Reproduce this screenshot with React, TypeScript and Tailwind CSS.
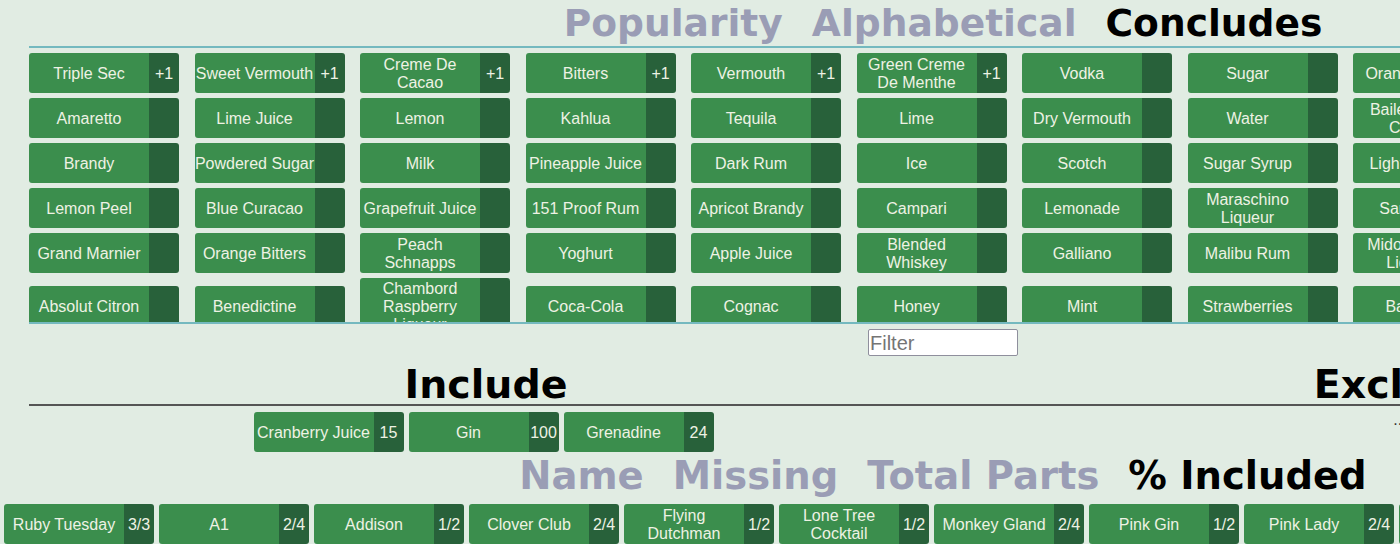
import React from 'react';

// Ingredient picker: sortable tile grid, include/exclude lists, drink results
type Tile = { name: string; badge?: string };

const popular: Tile[][] = [
  [
    { name: 'Triple Sec', badge: '+1' },
    { name: 'Sweet Vermouth', badge: '+1' },
    { name: 'Creme De\nCacao', badge: '+1' },
    { name: 'Bitters', badge: '+1' },
    { name: 'Vermouth', badge: '+1' },
    { name: 'Green Creme\nDe Menthe', badge: '+1' },
    { name: 'Vodka' },
    { name: 'Sugar' },
    { name: 'Orange Juice' },
  ],
  [
    { name: 'Amaretto' },
    { name: 'Lime Juice' },
    { name: 'Lemon' },
    { name: 'Kahlua' },
    { name: 'Tequila' },
    { name: 'Lime' },
    { name: 'Dry Vermouth' },
    { name: 'Water' },
    { name: 'Baileys Irish\nCream' },
  ],
  [
    { name: 'Brandy' },
    { name: 'Powdered Sugar' },
    { name: 'Milk' },
    { name: 'Pineapple Juice' },
    { name: 'Dark Rum' },
    { name: 'Ice' },
    { name: 'Scotch' },
    { name: 'Sugar Syrup' },
    { name: 'Light Cream' },
  ],
  [
    { name: 'Lemon Peel' },
    { name: 'Blue Curacao' },
    { name: 'Grapefruit Juice' },
    { name: '151 Proof Rum' },
    { name: 'Apricot Brandy' },
    { name: 'Campari' },
    { name: 'Lemonade' },
    { name: 'Maraschino\nLiqueur' },
    { name: 'Sambuca' },
  ],
  [
    { name: 'Grand Marnier' },
    { name: 'Orange Bitters' },
    { name: 'Peach\nSchnapps' },
    { name: 'Yoghurt' },
    { name: 'Apple Juice' },
    { name: 'Blended\nWhiskey' },
    { name: 'Galliano' },
    { name: 'Malibu Rum' },
    { name: 'Midori Melon\nLiqueur' },
  ],
  [
    { name: 'Absolut Citron' },
    { name: 'Benedictine' },
    { name: 'Chambord\nRaspberry\nLiqueur' },
    { name: 'Coca-Cola' },
    { name: 'Cognac' },
    { name: 'Honey' },
    { name: 'Mint' },
    { name: 'Strawberries' },
    { name: 'Banana' },
  ],
];

const included: Tile[] = [
  { name: 'Cranberry Juice', badge: '15' },
  { name: 'Gin', badge: '100' },
  { name: 'Grenadine', badge: '24' },
];

const drinks: Tile[] = [
  { name: 'Ruby Tuesday', badge: '3/3' },
  { name: 'A1', badge: '2/4' },
  { name: 'Addison', badge: '1/2' },
  { name: 'Clover Club', badge: '2/4' },
  { name: 'Flying\nDutchman', badge: '1/2' },
  { name: 'Lone Tree\nCocktail', badge: '1/2' },
  { name: 'Monkey Gland', badge: '2/4' },
  { name: 'Pink Gin', badge: '1/2' },
  { name: 'Pink Lady', badge: '2/4' },
  { name: 'White Lady', badge: '1/3' },
];

const TileBox: React.FC<{ tile: Tile }> = ({ tile }) => (
  <div className="flex w-[150px] shrink-0 overflow-hidden rounded-[3px] text-[16px] leading-[18px] text-[#eef2e4]">
    <div className="flex min-h-[40px] w-[120px] items-center justify-center whitespace-pre-line bg-[#3b8e4d] pt-[2px] text-center">
      {tile.name}
    </div>
    <div className="flex w-[30px] items-center justify-center bg-[#28613a] pt-[2px]">{tile.badge}</div>
  </div>
);

const Heading: React.FC<{ words: string[]; active: number; className?: string }> = ({ words, active, className }) => (
  <div className={`flex justify-center gap-[29px] font-bold whitespace-nowrap ${className ?? ''}`} style={{ fontFamily: '"DejaVu Sans", sans-serif' }}>
    {words.map((w, i) => (
      <span key={w} className={i === active ? 'text-black' : 'text-[#9a9db5]'}>
        {w}
      </span>
    ))}
  </div>
);

export default function App() {
  return (
    <div
      className="h-[544px] w-[1400px] overflow-hidden bg-[#e1ece3]"
      style={{ fontFamily: '"Liberation Sans", Arial, sans-serif' }}
    >
      <div className="ml-[29px] w-[1828px]">
        <Heading
          words={['Popularity', 'Alphabetical', 'Concludes']}
          active={2}
          className="h-[46px] text-[37.6px] leading-[46px]"
        />

        <div className="flex h-[278px] flex-col gap-[5px] overflow-hidden border-y-2 border-[#74b9bf] pt-[5px]">
          {popular.map((row, r) => (
            <div key={r} className="flex items-center gap-[15.5px]">
              {row.map((t) => (
                <TileBox key={t.name} tile={t} />
              ))}
            </div>
          ))}
        </div>

        <div className="flex justify-center pt-[5px]">
          <input
            placeholder="Filter"
            className="h-[27px] w-[150px] rounded-[2px] border border-[#8f8f9d] bg-white px-[1px] text-[20px] placeholder:text-[#757575]"
          />
        </div>

        <div className="grid grid-cols-2">
          <div>
            <div
              className="border-b-2 border-[#555555] pt-[8px] text-center text-[39.5px] leading-[40px] font-bold text-black"
              style={{ fontFamily: '"DejaVu Sans", sans-serif' }}
            >
              Include
            </div>
            <div className="flex justify-center pt-[6px]">
              {included.map((t) => (
                <div key={t.name} className="mr-[5px]">
                  <TileBox tile={t} />
                </div>
              ))}
            </div>
          </div>
          <div>
            <div
              className="border-b-2 border-[#555555] pt-[8px] text-center text-[39.5px] leading-[40px] font-bold text-black"
              style={{ fontFamily: '"DejaVu Sans", sans-serif' }}
            >
              Exclude
            </div>
            <div className="pt-[2px] text-center text-[16px] text-[#333]">...</div>
          </div>
        </div>
      </div>

      <div className="ml-[29px] w-[1828px]">
        <Heading
          words={['Name', 'Missing', 'Total Parts', '% Included']}
          active={3}
          className="h-[52px] text-[38.5px] leading-[48px]"
        />
      </div>

      <div className="ml-[4px] flex gap-[5px]">
        {drinks.map((t) => (
          <TileBox key={t.name} tile={t} />
        ))}
      </div>
    </div>
  );
}
